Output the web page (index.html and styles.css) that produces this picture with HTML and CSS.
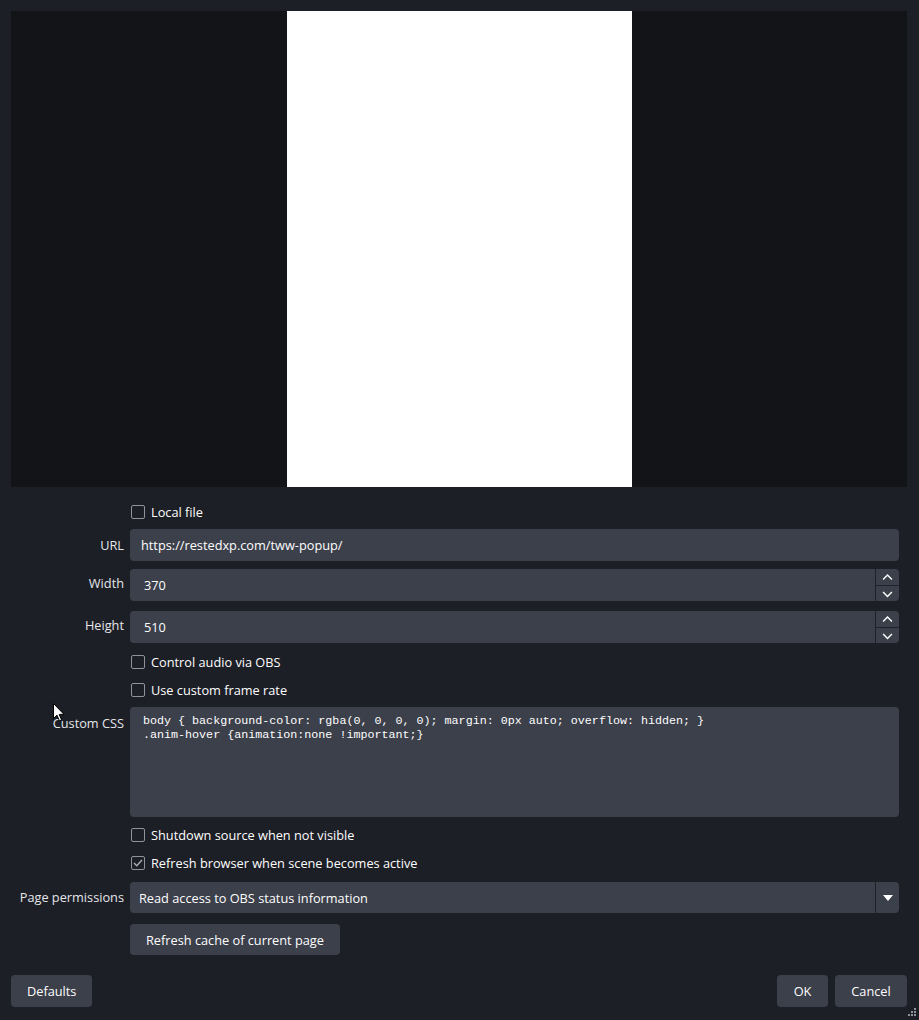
FILE: index.html
```html
<!DOCTYPE html>
<html>
<head>
  <title>Browser Source Properties</title>
  <meta name="viewport" content="width=device-width, initial-scale=1.0">
  <link rel="stylesheet" href="styles.css">
</head>
<body>
  <div class="dialog">
    <div class="preview">
      <div class="preview-page"></div>
    </div>

    <div class="form">
      <div class="row check-row first">
        <div class="label"></div>
        <label class="check"><span class="box"></span>Local file</label>
      </div>

      <div class="row field-row url-row">
        <div class="label">URL</div>
        <div class="field">https://restedxp.com/tww-popup/</div>
      </div>

      <div class="row field-row width-row">
        <div class="label raised">Width</div>
        <div class="field spin">
          <span class="value">370</span>
          <div class="spin-btns">
            <svg width="10" height="6" viewBox="0 0 10 6"><path d="M1 5 L5 1 L9 5" fill="none" stroke="#fff" stroke-width="1.3"/></svg>
            <svg width="10" height="6" viewBox="0 0 10 6"><path d="M1 1 L5 5 L9 1" fill="none" stroke="#fff" stroke-width="1.3"/></svg>
          </div>
        </div>
      </div>

      <div class="row field-row height-row">
        <div class="label raised">Height</div>
        <div class="field spin">
          <span class="value">510</span>
          <div class="spin-btns">
            <svg width="10" height="6" viewBox="0 0 10 6"><path d="M1 5 L5 1 L9 5" fill="none" stroke="#fff" stroke-width="1.3"/></svg>
            <svg width="10" height="6" viewBox="0 0 10 6"><path d="M1 1 L5 5 L9 1" fill="none" stroke="#fff" stroke-width="1.3"/></svg>
          </div>
        </div>
      </div>

      <div class="row check-row audio-row">
        <div class="label"></div>
        <label class="check"><span class="box"></span>Control audio via OBS</label>
      </div>

      <div class="row check-row">
        <div class="label"></div>
        <label class="check"><span class="box"></span>Use custom frame rate</label>
      </div>

      <div class="row css-row">
        <div class="label">Custom CSS</div>
        <div class="code">body { background-color: rgba(0, 0, 0, 0); margin: 0px auto; overflow: hidden; }
.anim-hover {animation:none !important;}</div>
      </div>

      <div class="row check-row">
        <div class="label"></div>
        <label class="check"><span class="box"></span>Shutdown source when not visible</label>
      </div>

      <div class="row check-row">
        <div class="label"></div>
        <label class="check"><span class="box checked">
          <svg width="10" height="8" viewBox="0 0 10 8"><path d="M1 4 L3.8 6.8 L9 1" fill="none" stroke="#a9acb3" stroke-width="1.4"/></svg>
        </span>Refresh browser when scene becomes active</label>
      </div>

      <div class="row field-row perm-row">
        <div class="label raised-1">Page permissions</div>
        <div class="field combo">
          <span class="value">Read access to OBS status information</span>
          <div class="combo-btn">
            <svg width="10" height="6" viewBox="0 0 10 6"><path d="M0 0 L10 0 L5 6 Z" fill="#fff"/></svg>
          </div>
        </div>
      </div>

      <div class="row cache-row">
        <div class="label"></div>
        <button class="btn">Refresh cache of current page</button>
      </div>
    </div>

    <div class="footer">
      <button class="btn">Defaults</button>
      <div class="footer-right">
        <button class="btn ok">OK</button>
        <button class="btn cancel">Cancel</button>
      </div>
    </div>

    <svg class="cursor" width="12" height="19" viewBox="0 0 12 19">
      <path d="M0.5 0.5 L0.5 15.5 L4 12.2 L6.5 18 L8.6 17.1 L6.2 11.4 L11 11.4 Z" fill="#fff" stroke="#000" stroke-width="1"/>
    </svg>

    <div class="grip">
      <span></span><span></span><span></span><span></span><span></span><span></span>
    </div>
  </div>
</body>
</html>
```

FILE: styles.css
```css
* {
  box-sizing: border-box;
  margin: 0;
  padding: 0;
}

body {
  background-color: #1d1f26;
  color: #fefefe;
  font-family: "Open Sans", "Noto Sans", sans-serif;
  font-size: 12.75px;
}

.dialog {
  width: 919px;
  height: 1020px;
  position: relative;
  padding: 11px 0 0;
}

/* Preview */
.preview {
  margin: 0 12px 0 11px;
  height: 476px;
  background-color: #131418;
  display: flex;
  justify-content: center;
  padding-left: 8px;
}

.preview-page {
  width: 345px;
  background-color: #ffffff;
  margin-right: 8px;
}

/* Form */
.form {
  display: flex;
  flex-direction: column;
  padding-right: 20px;
}

.row {
  display: flex;
  align-items: center;
  gap: 6px;
  margin-top: 8px;
}

.row .label {
  width: 124px;
  flex-shrink: 0;
  text-align: right;
  color: #e4e6ea;
}

.row .label.raised {
  margin-bottom: 4px;
}

.row .label.raised-1 {
  margin-bottom: 2px;
}

.check-row {
  height: 20px;
}

.first {
  margin-top: 15px;
}

.url-row {
  margin-top: 7px;
}

.width-row {
  margin-top: 8px;
}

.height-row {
  margin-top: 10px;
}

.audio-row {
  margin-top: 9px;
}

.css-row {
  margin-top: 7px;
  align-items: flex-start;
}

.css-row .label {
  padding-top: 7px;
}

.perm-row {
  margin-top: 9px;
}

.cache-row {
  margin-top: 11px;
}

.check {
  display: flex;
  align-items: center;
  gap: 6px;
  padding-left: 1px;
  color: #fefefe;
}

.box {
  width: 14px;
  height: 14px;
  border: 1px solid #8f939b;
  border-radius: 2px;
  display: flex;
  align-items: center;
  justify-content: center;
}

.field {
  flex: 1;
  height: 32px;
  background-color: #3c404b;
  border-radius: 4px;
  display: flex;
  align-items: center;
  padding-left: 11px;
}

.field.spin {
  padding-left: 14px;
}

.field.spin .value,
.field.combo .value {
  flex: 1;
}

.field.combo {
  padding-left: 9px;
  height: 31px;
}

.spin-btns {
  width: 24px;
  height: 100%;
  border-left: 1px solid #1f2128;
  display: flex;
  flex-direction: column;
}

.spin-btns svg {
  flex: 1;
  margin: 0 auto;
}

.spin-btns svg:first-child {
  border-bottom: 1px solid #1f2128;
  width: 100%;
  padding: 4px 6px 3px;
  height: 16px;
}

.spin-btns svg:last-child {
  width: 100%;
  padding: 4px 6px 3px;
  height: 16px;
}

.combo-btn {
  width: 24px;
  height: 100%;
  border-left: 1px solid #1f2128;
  display: flex;
  align-items: center;
  justify-content: center;
}

.code {
  flex: 1;
  height: 110px;
  background-color: #3c404b;
  border-radius: 4px;
  padding: 7px 13px;
  font-family: "Liberation Mono", monospace;
  font-size: 11.7px;
  line-height: 14px;
  white-space: pre;
  color: #fefefe;
}

.btn {
  background-color: #3c404b;
  color: #fefefe;
  border: none;
  border-radius: 4px;
  height: 31px;
  font-family: "Open Sans", "Noto Sans", sans-serif;
  font-size: 12.75px;
  padding: 0 16px;
}

/* Footer */
.footer {
  display: flex;
  justify-content: space-between;
  padding: 0 12px 0 11px;
  margin-top: 20px;
}

.footer .btn {
  height: 32px;
}

.footer-right {
  display: flex;
  gap: 7px;
}

.btn.ok {
  width: 51px;
  padding: 0;
}

.btn.cancel {
  width: 72px;
  padding: 0;
}

/* mouse pointer over the label */
.cursor {
  position: absolute;
  left: 53px;
  top: 703px;
}

.grip {
  position: absolute;
  right: 3px;
  bottom: 3px;
  width: 9px;
  height: 9px;
}

.grip span {
  position: absolute;
  width: 2px;
  height: 2px;
  background-color: #8f939b;
}

.grip span:nth-child(1) { left: 7px; top: 0; }
.grip span:nth-child(2) { left: 4px; top: 3px; }
.grip span:nth-child(3) { left: 7px; top: 3px; }
.grip span:nth-child(4) { left: 1px; top: 6px; }
.grip span:nth-child(5) { left: 4px; top: 6px; }
.grip span:nth-child(6) { left: 7px; top: 6px; }
```
